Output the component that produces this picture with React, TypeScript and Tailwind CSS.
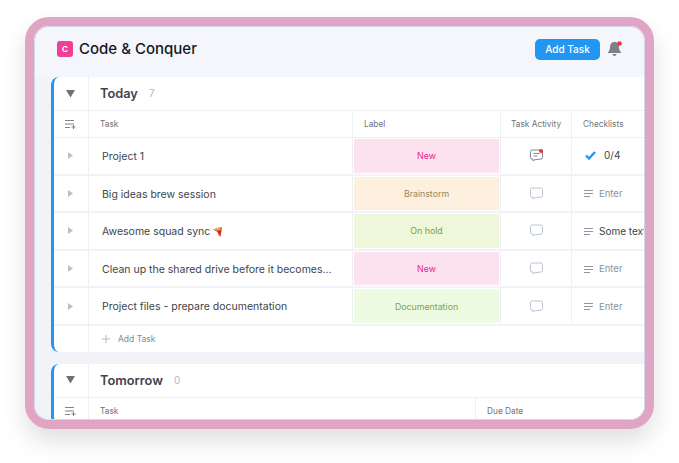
const font = "font-['Inter','Liberation_Sans',sans-serif]";

const rows = [
  { name: "Project 1", label: "New", tone: "bg-[#fce2ef] text-[#e6278a]", first: true },
  { name: "Big ideas brew session", label: "Brainstorm", tone: "bg-[#fef0df] text-[#99885f]", note: "Enter" },
  { name: "Awesome squad sync", label: "On hold", tone: "bg-[#eef7da] text-[#7f9c3c]", note: "Some text", pizza: true },
  { name: "Clean up the shared drive before it becomes...", label: "New", tone: "bg-[#fce2ef] text-[#e6278a]", note: "Enter" },
  { name: "Project files - prepare documentation", label: "Documentation", tone: "bg-[#edfbe3] text-[#7fa53e]", note: "Enter" },
];

function Caret({ big }: { big?: boolean }) {
  if (big) {
    return (
      <svg width="9" height="8" viewBox="0 0 9 8" className="mr-[2px]">
        <path d="M0 0h9L4.5 7.5z" fill="#6d7178" />
      </svg>
    );
  }
  return (
    <svg width="5" height="7" viewBox="0 0 5 7" className="mr-[2px]">
      <path d="M0 0l5 3.5L0 7z" fill="#b7bfcd" />
    </svg>
  );
}

function AddList() {
  return (
    <svg width="11" height="9" viewBox="0 0 11 9" fill="none" stroke="#7d828b" strokeWidth="1" className="mr-[2px]">
      <path d="M0 .5h9M0 4h9M0 7.5h5M8.5 5v4M6.5 7h4" />
    </svg>
  );
}

function Bubble({ dot }: { dot?: boolean }) {
  const stroke = dot ? "#7f8794" : "#bcc4d2";
  return (
    <svg width="13" height="13" viewBox="0 0 13 13" fill="none" stroke={stroke} strokeWidth="1">
      <path d="M2 1h9a1.5 1.5 0 0 1 1.5 1.5v6A1.5 1.5 0 0 1 11 10L4.5 10.8 3 12V10H2A1.5 1.5 0 0 1 .5 8.5v-6A1.5 1.5 0 0 1 2 1z" />
      {dot && <path d="M3.5 4.5h6M3.5 7h4" />}
      {dot && <circle cx="11" cy="2" r="2" fill="#e8363e" stroke="none" />}
    </svg>
  );
}

function Lines() {
  return (
    <svg width="9" height="7" viewBox="0 0 9 7" fill="none" stroke="#8f96a3" strokeWidth="1">
      <path d="M0 .5h9M0 3.5h9M0 6.5h6" />
    </svg>
  );
}

function Check() {
  return (
    <svg width="11" height="9" viewBox="0 0 11 9" fill="none" stroke="#2196f3" strokeWidth="2.4">
      <path d="M1 4.5l3 3L10 1" />
    </svg>
  );
}

function Pizza() {
  return (
    <svg width="9" height="10" viewBox="0 0 9 10" className="ml-[3px]">
      <path d="M0 2.5L8 0l1 .8L7.5 10 5.5 8 4.5 5z" fill="#d8472b" />
      <path d="M0 2.5L8 0l-.5 2.5-3 1z" fill="#e9b04a" />
      <circle cx="6.5" cy="5" r="1" fill="#8c2418" />
    </svg>
  );
}

function Bell() {
  return (
    <svg width="15" height="16" viewBox="0 0 15 16">
      <path d="M6.5.8C3.6 1.2 2 3.4 2 6c0 2.2-.6 3.8-2 5.3v.7h13v-.7C11.6 9.8 11 8.2 11 6c0-2.6-1.6-4.800-4.500-5.200z" fill="#7d8187" />
      <path d="M4.5 13h4c0 1.300-.9 2-2 2s-2-.7-2-2z" fill="#7d8187" />
      <circle cx="11.5" cy="2.5" r="2.3" fill="#e8363e" />
    </svg>
  );
}

function GroupTitle({ title, count }: { title: string; count: number }) {
  return (
    <div className="flex h-[34px] border-b border-[#eef0f5]">
      <div className="flex w-[35px] shrink-0 items-center justify-center border-r border-[#eef0f5]">
        <Caret big />
      </div>
      <div className="flex items-center pl-[11px]">
        <span className="text-[12.8px] font-semibold text-[#40444b]">{title}</span>
        <span className="ml-[11px] text-[10px] text-[#b4b8c0]">{count}</span>
      </div>
    </div>
  );
}

export default function App() {
  return (
    <div className={`h-[463px] w-[679px] overflow-hidden bg-white pl-[25px] pt-[17px] ${font}`}>
      <div className="h-[412px] w-[629px] rounded-[24px] border-[9px] border-[#e0a5c5] shadow-[0_12px_24px_rgba(0,0,0,0.13)]">
        <div className="flex h-full flex-col overflow-hidden rounded-[15px] border border-[#d3d9e4] bg-[#f4f6fb]">
          <header className="flex h-[50px] shrink-0 items-center pb-[6px] pl-[22px] pr-[21px]">
            <div className="flex h-[16px] w-[16px] items-center justify-center rounded-[3px] bg-[#ee4096] text-[8px] font-semibold text-white">
              C
            </div>
            <h1 className="ml-[6px] text-[15px] font-medium text-[#16181d]">Code &amp; Conquer</h1>
            <button className="ml-auto flex h-[21px] w-[65px] items-center justify-center rounded-[5px] bg-[#2196f3] text-[10px] font-medium text-white">
              Add Task
            </button>
            <div className="ml-[8px] flex">
              <Bell />
            </div>
          </header>

          <main className="flex min-h-0 flex-1 flex-col gap-[12px] overflow-hidden bg-[#f1f3f8] pl-[16px]">
            <section className="w-[640px] shrink-0 overflow-hidden rounded-l-[8px] border-l-[3px] border-[#2196f3] bg-white">
              <GroupTitle title="Today" count={7} />
              <div className="flex h-[27px] border-b border-[#eef0f5] text-[8.3px] text-[#6f737b]">
                <div className="flex w-[35px] shrink-0 items-center justify-center border-r border-[#eef0f5]">
                  <AddList />
                </div>
                <div className="flex w-[264px] shrink-0 items-center border-r border-[#eef0f5] pl-[11px]">Task</div>
                <div className="flex w-[148px] shrink-0 items-center border-r border-[#eef0f5] pl-[11px]">Label</div>
                <div className="flex w-[71px] shrink-0 items-center border-r border-[#eef0f5] pl-[10px]">Task Activity</div>
                <div className="flex items-center pl-[11px]">Checklists</div>
              </div>
              {rows.map((row) => (
                <div key={row.name} className="flex h-[37.6px] border-b-2 border-[#f1f3f8]">
                  <div className="flex w-[35px] shrink-0 items-center justify-center border-r border-[#eef0f5]">
                    <Caret />
                  </div>
                  <div className="flex w-[264px] shrink-0 items-center border-r border-[#eef0f5] pl-[13px] pt-[2px] text-[10.5px] text-[#40444b]">
                    <span className="whitespace-nowrap">{row.name}</span>
                    {row.pizza && <Pizza />}
                  </div>
                  <div className="flex w-[148px] shrink-0 border-r border-[#eef0f5] p-px">
                    <div className={`flex flex-1 items-center justify-center text-[8.8px] ${row.tone}`}>{row.label}</div>
                  </div>
                  <div className="flex w-[71px] shrink-0 items-center justify-center border-r border-[#eef0f5]">
                    <Bubble dot={row.first} />
                  </div>
                  {row.first ? (
                    <div className="flex items-center pl-[13px] text-[10px] text-[#40444b]">
                      <Check />
                      <span className="ml-[8px]">0/4</span>
                    </div>
                  ) : (
                    <div className={`flex items-center whitespace-nowrap pl-[12px] pt-[1px] ${row.note === "Enter" ? "text-[9.5px] text-[#8d9198]" : "text-[10px] text-[#40444b]"}`}>
                      <Lines />
                      <span className="ml-[6px]">{row.note}</span>
                    </div>
                  )}
                </div>
              ))}
              <div className="flex h-[26px]">
                <div className="w-[35px] shrink-0 border-r border-[#eef0f5]" />
                <div className="flex items-center pl-[13px] text-[8.5px] text-[#85898f]">
                  <svg width="8" height="8" viewBox="0 0 8 8" fill="none" stroke="#b4b8c0" strokeWidth="1">
                    <path d="M4 0v8M0 4h8" />
                  </svg>
                  <span className="ml-[8px]">Add Task</span>
                </div>
              </div>
            </section>

            <section className="w-[640px] shrink-0 overflow-hidden rounded-l-[8px] border-l-[3px] border-[#2196f3] bg-white">
              <GroupTitle title="Tomorrow" count={0} />
              <div className="flex h-[27px] text-[8.3px] text-[#6f737b]">
                <div className="flex w-[35px] shrink-0 items-center justify-center border-r border-[#eef0f5]">
                  <AddList />
                </div>
                <div className="flex w-[387px] shrink-0 items-center border-r border-[#eef0f5] pl-[11px]">Task</div>
                <div className="flex items-center pl-[11px]">Due Date</div>
              </div>
            </section>
          </main>
        </div>
      </div>
    </div>
  );
}
